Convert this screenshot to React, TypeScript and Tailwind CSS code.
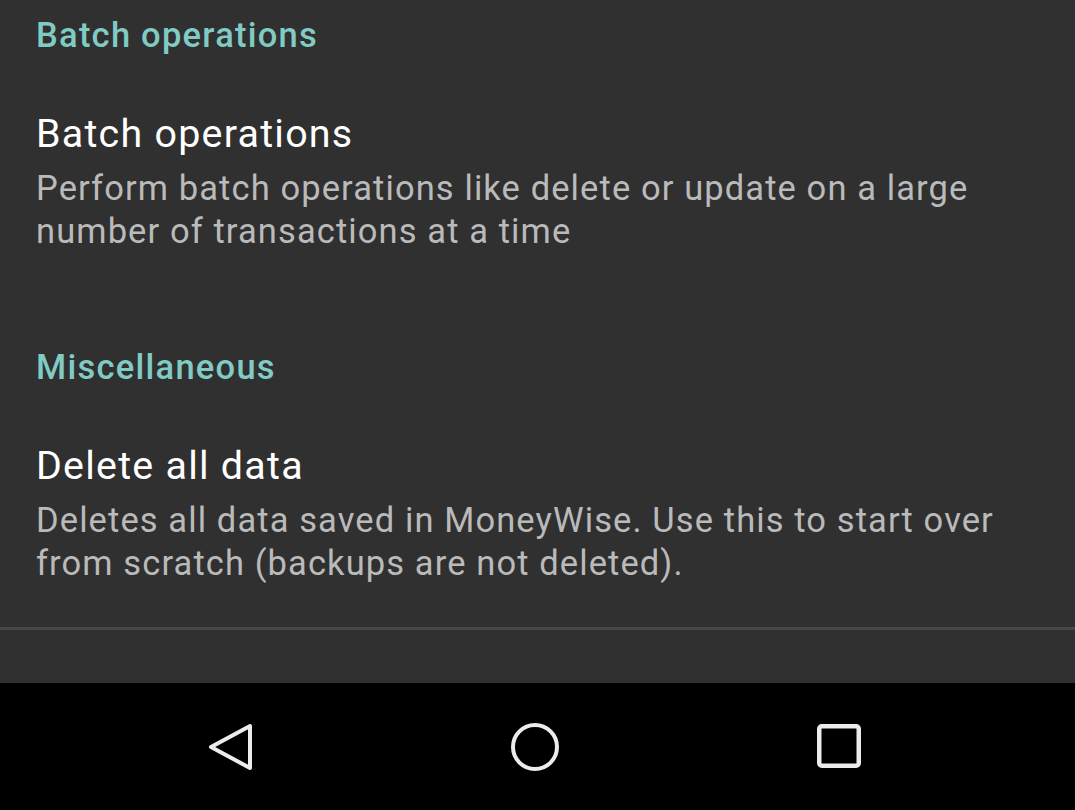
import React from "react";

function Category({ children, className = "" }: { children: React.ReactNode; className?: string }) {
  return (
    <div className={`text-[34.5px] leading-[43px] font-medium tracking-[1.25px] text-[#80cbc4] ${className}`}>{children}</div>
  );
}

function Pref({ title, summary, className = "" }: { title: string; summary: string; className?: string }) {
  return (
    <div className={className}>
      <div className="text-[39.4px] leading-[48px] tracking-[1.25px] text-white">{title}</div>
      <div className="mt-[9px] text-[34.5px] leading-[43px] tracking-[1.1px] text-[#bababa]">{summary}</div>
    </div>
  );
}

export default function App() {
  return (
    <div
      className="w-[1075px] h-[810px] flex flex-col bg-[#303030] overflow-hidden"
      style={{ fontFamily: "Roboto, 'Liberation Sans', sans-serif" }}
    >
      <div className="flex-1 flex flex-col">
        <div className="pl-[36px] pr-[36px] pt-[14px]">
          <Category>Batch operations</Category>
          <Pref
            className="mt-[53px]"
            title="Batch operations"
            summary="Perform batch operations like delete or update on a large number of transactions at a time"
          />
          <Category className="mt-[93px]">Miscellaneous</Category>
          <Pref
            className="mt-[53px]"
            title="Delete all data"
            summary="Deletes all data saved in MoneyWise. Use this to start over from scratch (backups are not deleted)."
          />
        </div>
        <div className="mt-[42px] h-[3px] bg-[#484848]" />
      </div>
      <div className="h-[127px] bg-black flex items-center justify-center gap-[244px] pr-[5px]">
        <svg width="60" height="60" viewBox="0 0 60 60" fill="none">
          <path d="M10 30 L49 9 L49 51 Z" stroke="#ececec" strokeWidth="4" strokeLinejoin="round" />
        </svg>
        <svg width="60" height="60" viewBox="0 0 60 60" fill="none">
          <circle cx="30" cy="30" r="22" stroke="#ececec" strokeWidth="4" />
        </svg>
        <svg width="60" height="60" viewBox="0 0 60 60" fill="none">
          <rect x="10.25" y="9.25" width="39.5" height="39.5" rx="2.5" stroke="#ececec" strokeWidth="4.5" />
        </svg>
      </div>
    </div>
  );
}
